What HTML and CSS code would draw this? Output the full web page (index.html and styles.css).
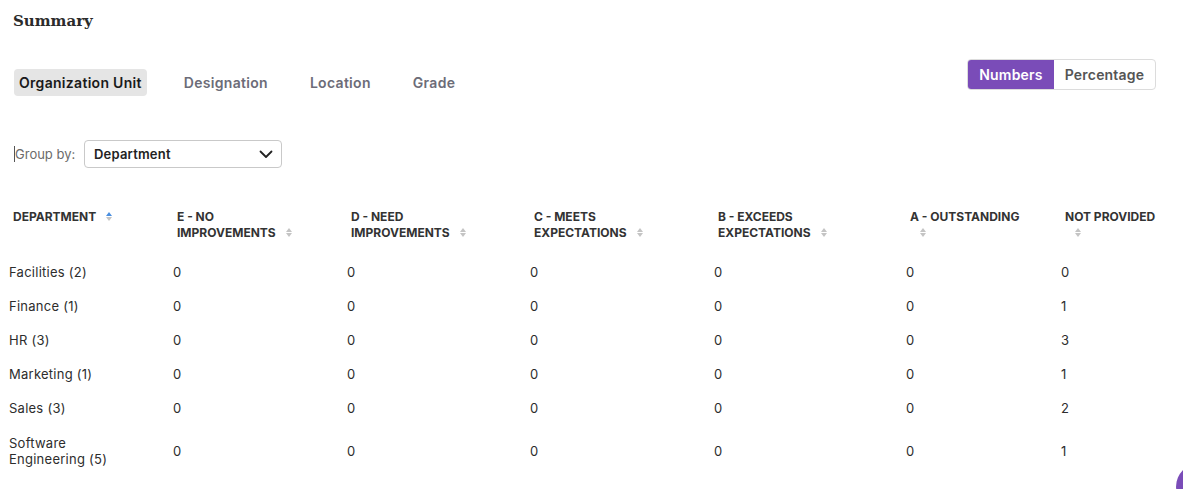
FILE: index.html
```html
<!DOCTYPE html>
<html>
<head>
<meta charset="utf-8">
<link rel="stylesheet" href="styles.css">
</head>
<body>
<div class="page">
  <h1 class="title">Summary</h1>
  <div class="toolbar">
    <nav class="tabs">
      <span class="tab active">Organization Unit</span>
      <span class="tab">Designation</span>
      <span class="tab">Location</span>
      <span class="tab">Grade</span>
    </nav>
    <div class="toggle">
      <span class="toggle-btn on">Numbers</span>
      <span class="toggle-btn">Percentage</span>
    </div>
  </div>
  <div class="groupby">
    <label class="groupby-label">Group by:</label>
    <div class="select">
      <span>Department</span>
      <svg class="chev" width="14" height="9" viewBox="0 0 14 9"><path d="M1.5 1.5 L7 7 L12.5 1.5" fill="none" stroke="#222" stroke-width="1.8" stroke-linecap="round" stroke-linejoin="round"/></svg>
    </div>
  </div>
  <table class="grid">
    <colgroup>
      <col style="width:164px"><col style="width:174px"><col style="width:183px"><col style="width:184px"><col style="width:192px"><col style="width:155px"><col>
    </colgroup>
    <thead>
      <tr>
        <th>DEPARTMENT<span class="sort active"><i class="up"></i><i class="down"></i></span></th>
        <th>E - NO<br>IMPROVEMENTS<span class="sort"><i class="up"></i><i class="down"></i></span></th>
        <th>D - NEED<br>IMPROVEMENTS<span class="sort"><i class="up"></i><i class="down"></i></span></th>
        <th>C - MEETS<br>EXPECTATIONS<span class="sort"><i class="up"></i><i class="down"></i></span></th>
        <th>B - EXCEEDS<br>EXPECTATIONS<span class="sort"><i class="up"></i><i class="down"></i></span></th>
        <th>A - OUTSTANDING<br><span class="sort"><i class="up"></i><i class="down"></i></span></th>
        <th>NOT PROVIDED<br><span class="sort"><i class="up"></i><i class="down"></i></span></th>
      </tr>
    </thead>
    <tbody>
      <tr><td>Facilities (2)</td><td>0</td><td>0</td><td>0</td><td>0</td><td>0</td><td>0</td></tr>
      <tr><td>Finance (1)</td><td>0</td><td>0</td><td>0</td><td>0</td><td>0</td><td>1</td></tr>
      <tr><td>HR (3)</td><td>0</td><td>0</td><td>0</td><td>0</td><td>0</td><td>3</td></tr>
      <tr><td>Marketing (1)</td><td>0</td><td>0</td><td>0</td><td>0</td><td>0</td><td>1</td></tr>
      <tr><td>Sales (3)</td><td>0</td><td>0</td><td>0</td><td>0</td><td>0</td><td>2</td></tr>
      <tr><td>Software<br>Engineering (5)</td><td>0</td><td>0</td><td>0</td><td>0</td><td>0</td><td>1</td></tr>
    </tbody>
  </table>
</div>
<div class="fab"></div>
</body>
</html>
```
FILE: styles.css
```css
html, body { margin: 0; padding: 0; background: #fff; }
body {
  font-family: Inter, "Noto Sans", "Liberation Sans", sans-serif;
  color: #2d2d2d;
  overflow: hidden;
  height: 489px;
}
.page { padding: 0; }
.title {
  margin: 0;
  padding: 11px 0 0 13px;
  font-family: "DejaVu Serif", "Liberation Serif", serif;
  font-size: 15px;
  line-height: 20px;
  font-weight: 700;
  color: #2b2b2b;
}
.toolbar {
  display: flex;
  justify-content: space-between;
  align-items: flex-start;
  margin-top: 28px;
  padding: 0 27px 0 14px;
}
.tabs {
  display: flex;
  gap: 32px;
  margin-top: 10px;
}
.tab {
  height: 27px;
  line-height: 27px;
  padding: 0 5px;
  border-radius: 4px;
  font-size: 14px;
  font-weight: 600;
  letter-spacing: 0.3px;
  color: #6c6c78;
}
.tab.active { background: #e5e5e5; color: #1a1a1a; }
.toggle {
  display: flex;
  border: 1px solid #dcdcdc;
  border-radius: 4px;
  overflow: hidden;
  height: 29px;
}
.toggle-btn {
  font-size: 14px;
  font-weight: 600;
  letter-spacing: 0.2px;
  line-height: 29px;
  text-align: center;
  color: #555;
  width: 101px;
}
.toggle-btn.on {
  width: 86px;
  background: #7a4cb8;
  color: #fff;
}
.groupby {
  display: flex;
  align-items: center;
  margin-top: 44px;
  padding-left: 14px;
}
.groupby-label {
  font-size: 13px;
  color: #6b6b6b;
  width: 69px;
  border-left: 1px solid #555;
  line-height: 16px;
}
.select {
  height: 26px;
  border: 1px solid #c9c9c9;
  border-radius: 4px;
  display: flex;
  align-items: center;
  justify-content: space-between;
  padding: 0 8px 0 9px;
  width: 179px;
  font-size: 13px;
  font-weight: 600;
  letter-spacing: 0.2px;
  color: #222;
}
.grid {
  margin: 41px 0 0 9px;
  border-collapse: collapse;
  table-layout: fixed;
  width: 1174px;
}
.grid th {
  text-align: left;
  vertical-align: top;
  font-size: 12px;
  font-weight: 700;
  line-height: 16px;
  color: #333;
  padding: 0 0 14px 4px;
}
.grid td {
  font-size: 13px;
  letter-spacing: 0.25px;
  line-height: 16px;
  padding: 9px 0;
  vertical-align: middle;
  color: #2d2d2d;
}
.grid tbody tr:last-child td { padding: 10px 0; }
.sort {
  display: inline-flex;
  flex-direction: column;
  gap: 1px;
  margin-left: 10px;
  vertical-align: middle;
  position: relative;
  top: -1px;
}
.sort i {
  display: block;
  width: 0;
  height: 0;
  border-left: 3.5px solid transparent;
  border-right: 3.5px solid transparent;
}
.sort i.up { border-bottom: 4px solid #c4c4c4; }
.sort i.down { border-top: 4px solid #c4c4c4; }
.sort.active i.up { border-bottom-color: #4a8fe0; }
.fab {
  position: fixed;
  right: -41px;
  bottom: -22px;
  width: 48px;
  height: 48px;
  border-radius: 50%;
  background: #7a4cb8;
}
```
